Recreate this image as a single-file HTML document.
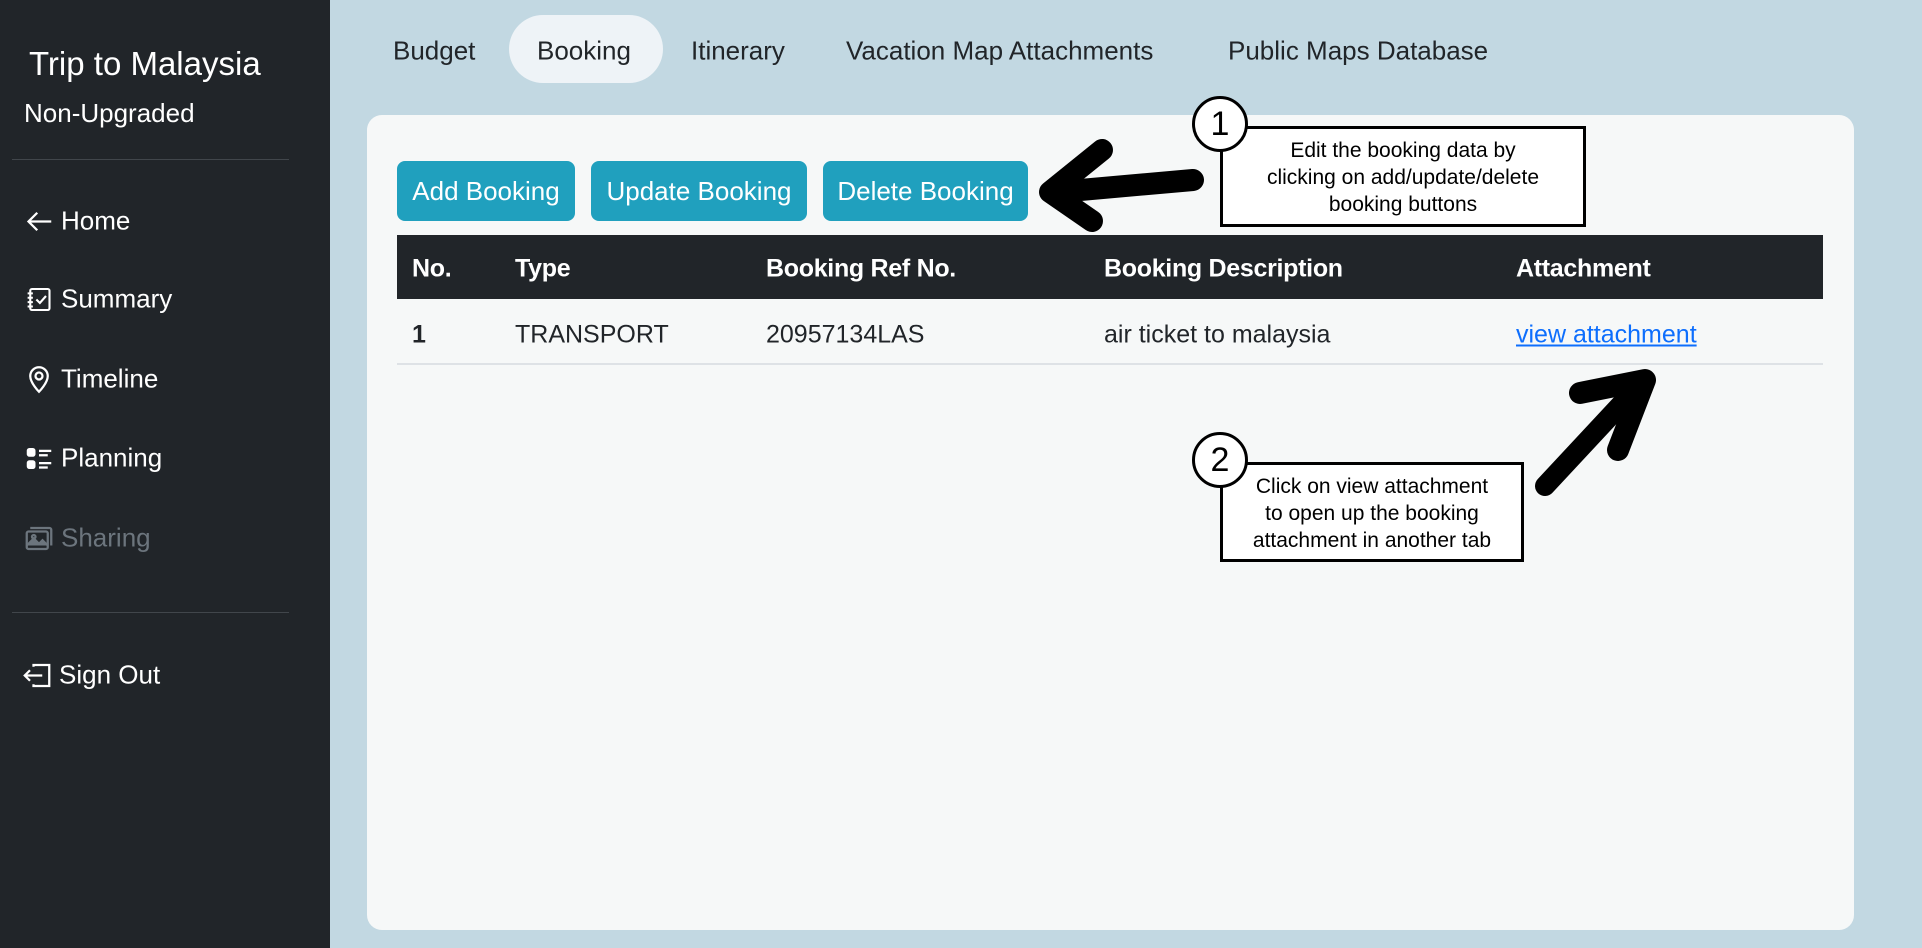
<!DOCTYPE html>
<html><head><meta charset="utf-8"><style>
*{margin:0;padding:0;box-sizing:border-box}
body{width:1922px;height:948px;overflow:hidden;background:#c2d8e2;font-family:"Liberation Sans",sans-serif;position:relative}
.side{position:absolute;left:0;top:0;width:330px;height:948px;background:#212529;color:#fff}
.abs{position:absolute;white-space:nowrap}
.hr{position:absolute;left:12px;width:277px;height:1px;background:#41464b}
.mi{position:absolute;left:25px;font-size:26px;display:flex;align-items:center;gap:8px;transform:translateY(-50%)}
.mi svg{width:28px;height:28px}
.tab{position:absolute;top:51px;transform:translateY(-50%);font-size:26px;color:#212529}
.card{position:absolute;left:367px;top:115px;width:1487px;height:815px;background:#f6f8f8;border-radius:15px}
.btn{position:absolute;top:161px;height:60px;background:#20a0be;color:#fff;border-radius:8px;font-size:26px;display:flex;align-items:center;justify-content:center}
.th{position:absolute;top:269px;transform:translateY(-50%);color:#fff;font-weight:bold;font-size:25px;letter-spacing:-0.3px}
.td{position:absolute;top:335px;transform:translateY(-50%);color:#212529;font-size:25px}
.box{position:absolute;background:#fff;border:3px solid #000;text-align:center;font-size:21px;line-height:27px;color:#000}
.circ{position:absolute;width:56px;height:56px;border:3px solid #000;border-radius:50%;background:#fff;font-size:34px;display:flex;align-items:center;justify-content:center}
</style></head><body>
<div class="side">
 <div class="abs" style="left:29px;top:45px;font-size:33px">Trip to Malaysia</div>
 <div class="abs" style="left:24px;top:98px;font-size:26px">Non-Upgraded</div>
 <div class="hr" style="top:159px"></div>
 <div class="mi" style="top:221px"><svg viewBox="0 0 16 16"><path d="M15 8H2M7 3L2 8l5 5" stroke="#fff" stroke-width="1.3" fill="none"/></svg>Home</div>
 <div class="mi" style="top:299px"><svg viewBox="0 0 16 16" fill="none" stroke="#fff" stroke-width="1.2"><rect x="3" y="2" width="11" height="12" rx="1"/><path d="M1.5 4.5h3M1.5 7h3M1.5 9.5h3M1.5 12h3M6.5 8l2 2 3.5-4"/></svg>Summary</div>
 <div class="mi" style="top:379px"><svg viewBox="0 0 16 16" fill="none" stroke="#fff" stroke-width="1.3"><path d="M8 15s5-5 5-9A5 5 0 0 0 3 6c0 4 5 9 5 9z"/><circle cx="8" cy="6" r="2"/></svg>Timeline</div>
 <div class="mi" style="top:458px"><svg viewBox="0 0 16 16" fill="#fff"><rect x="1" y="2" width="5" height="5" rx="1.5"/><rect x="1" y="9" width="5" height="5" rx="1.5"/><rect x="8" y="3" width="7" height="1.3"/><rect x="8" y="5.5" width="5" height="1.3"/><rect x="8" y="10" width="7" height="1.3"/><rect x="8" y="12.5" width="5" height="1.3"/></svg>Planning</div>
 <div class="mi" style="top:538px;color:#6c757d"><svg viewBox="0 0 16 16" fill="none" stroke="#6c757d" stroke-width="1.3"><rect x="1" y="4" width="12" height="10" rx="1"/><path d="M3 2h11a1 1 0 0 1 1 1v9"/><path d="M1 12l4-4 3 3 2-2 3 3" fill="#6c757d"/><circle cx="5" cy="7" r="1"/></svg>Sharing</div>
 <div class="hr" style="top:612px"></div>
 <div class="mi" style="top:675px;left:23px"><svg viewBox="0 0 16 16" fill="none" stroke="#fff" stroke-width="1.3"><path d="M6 3V2h9v12H6v-1"/><path d="M11 8H1M4 5L1 8l3 3"/></svg>Sign Out</div>
</div>
<div class="abs" style="left:509px;top:15px;width:154px;height:68px;border-radius:34px;background:#eef3f7"></div>
<div class="tab" style="left:393px">Budget</div>
<div class="tab" style="left:537px">Booking</div>
<div class="tab" style="left:691px">Itinerary</div>
<div class="tab" style="left:846px">Vacation Map Attachments</div>
<div class="tab" style="left:1228px">Public Maps Database</div>
<div class="card"></div>
<div class="btn" style="left:397px;width:178px">Add Booking</div>
<div class="btn" style="left:591px;width:216px">Update Booking</div>
<div class="btn" style="left:823px;width:205px">Delete Booking</div>
<div class="abs" style="left:397px;top:235px;width:1426px;height:64px;background:#212529"></div>
<div class="th" style="left:412px">No.</div>
<div class="th" style="left:515px">Type</div>
<div class="th" style="left:766px">Booking Ref No.</div>
<div class="th" style="left:1104px">Booking Description</div>
<div class="th" style="left:1516px">Attachment</div>
<div class="td" style="left:412px;font-weight:bold">1</div>
<div class="td" style="left:515px">TRANSPORT</div>
<div class="td" style="left:766px">20957134LAS</div>
<div class="td" style="left:1104px">air ticket to malaysia</div>
<div class="td" style="left:1516px;color:#0d6efd;text-decoration:underline">view attachment</div>
<div class="abs" style="left:397px;top:363px;width:1426px;height:2px;background:#dee2e6"></div>
<svg class="abs" style="left:0;top:0" width="1922" height="948">
 <g stroke="#000" stroke-linecap="round" stroke-linejoin="round" fill="none">
  <path d="M1193 180 L1058 192" stroke-width="22"/>
  <path d="M1102 150 L1050 192 L1092 221" stroke-width="22"/>
  <path d="M1545 486 L1640 384" stroke-width="20"/>
  <path d="M1580 393 L1645 380 L1618 450" stroke-width="22"/>
 </g>
</svg>
<div class="box" style="left:1220px;top:126px;width:366px;height:101px;padding-top:8px">Edit the booking data by<br>clicking on add/update/delete<br>booking buttons</div>
<div class="circ" style="left:1192px;top:96px">1</div>
<div class="box" style="left:1220px;top:462px;width:304px;height:100px;padding-top:8px">Click on view attachment<br>to open up the booking<br>attachment in another tab</div>
<div class="circ" style="left:1192px;top:432px">2</div>
</body></html>
